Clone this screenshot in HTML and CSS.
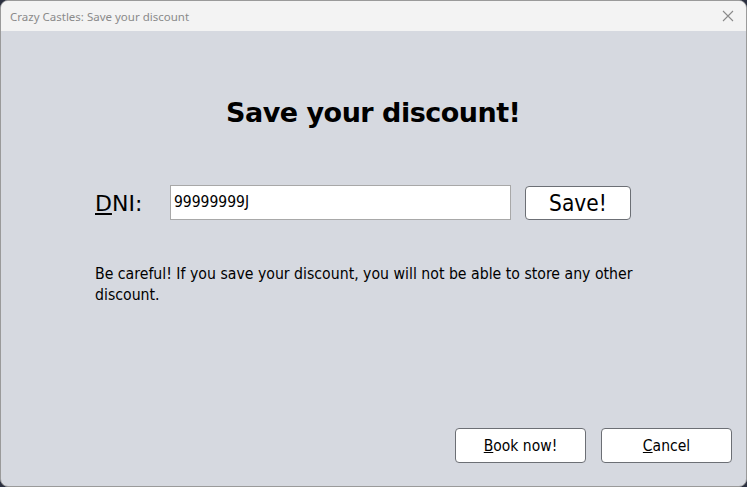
FILE: index.html
```html
<!DOCTYPE html>
<html>
<head>
<meta charset="utf-8">
<link rel="stylesheet" href="styles.css">
</head>
<body>
<div class="window">
  <div class="titlebar">
    <span class="title">Crazy Castles: Save your discount</span>
    <svg class="close" width="12" height="12" viewBox="0 0 12 12"><path d="M1 1L11 11M11 1L1 11" stroke="#8a8a8a" stroke-width="1.1" fill="none"/></svg>
  </div>
  <div class="content">
    <h1 class="heading">Save your discount!</h1>
    <div class="form-row">
      <label class="dni-label"><u>D</u>NI:</label>
      <div class="field">99999999J</div>
      <button class="btn save-btn">Save!</button>
    </div>
    <p class="warning">Be careful! If you save your discount, you will not be able to store any other discount.</p>
    <div class="spacer"></div>
    <div class="actions">
      <button class="btn action-btn"><u>B</u>ook now!</button>
      <button class="btn action-btn"><u>C</u>ancel</button>
    </div>
  </div>
</div>
</body>
</html>
```
FILE: styles.css
```css
html, body {
  margin: 0;
  padding: 0;
  width: 747px;
  height: 487px;
  background: #2b3040;
  overflow: hidden;
}
.window {
  box-sizing: border-box;
  width: 747px;
  height: 487px;
  border: 1px solid #9a9a9a;
  border-radius: 8px;
  background: #d6d9e0;
  overflow: hidden;
  display: flex;
  flex-direction: column;
}
.titlebar {
  height: 30px;
  flex: none;
  background: #f3f3f3;
  display: flex;
  align-items: center;
  justify-content: space-between;
  padding: 0 12px 0 9px;
}
.title {
  font-family: "Noto Sans", sans-serif;
  font-size: 11.5px;
  color: #8a8a8a;
}
.close {
  display: block;
}
.content {
  flex: 1;
  display: flex;
  flex-direction: column;
  padding: 0 14px 23px 94px;
}
.heading {
  margin: 62px 0 0 131px;
  font-family: "DejaVu Sans", sans-serif;
  font-weight: bold;
  font-size: 27px;
  letter-spacing: -0.5px;
  color: #000;
  line-height: 40px;
}
.form-row {
  margin-top: 51px;
  display: flex;
  align-items: center;
}
.dni-label {
  font-family: "DejaVu Sans", sans-serif;
  font-size: 22px;
  color: #000;
  width: 75px;
  margin-top: 2px;
}
.field {
  box-sizing: border-box;
  width: 341px;
  height: 35px;
  border: 1px solid #a8a8a8;
  background: #fff;
  font-family: "DejaVu Sans Condensed", "DejaVu Sans", sans-serif;
  font-size: 15.5px;
  display: flex;
  align-items: center;
  padding-left: 3px;
}
.btn {
  box-sizing: border-box;
  background: #fff;
  border: 1px solid #6c6f75;
  border-radius: 4px;
  color: #000;
  font-family: "DejaVu Sans Condensed", "DejaVu Sans", sans-serif;
  padding: 0;
}
.save-btn {
  margin-left: 14px;
  width: 106px;
  height: 34px;
  font-size: 22.5px;
  margin-top: 2px;
}
.warning {
  margin: 43px 0 0 0;
  font-family: "DejaVu Sans Condensed", "DejaVu Sans", sans-serif;
  font-size: 15.7px;
  line-height: 21px;
  color: #000;
  width: 580px;
}
.spacer {
  flex: 1;
}
.actions {
  display: flex;
  justify-content: flex-end;
  gap: 15px;
}
.action-btn {
  width: 131px;
  height: 35px;
  font-size: 15.5px;
}
```
